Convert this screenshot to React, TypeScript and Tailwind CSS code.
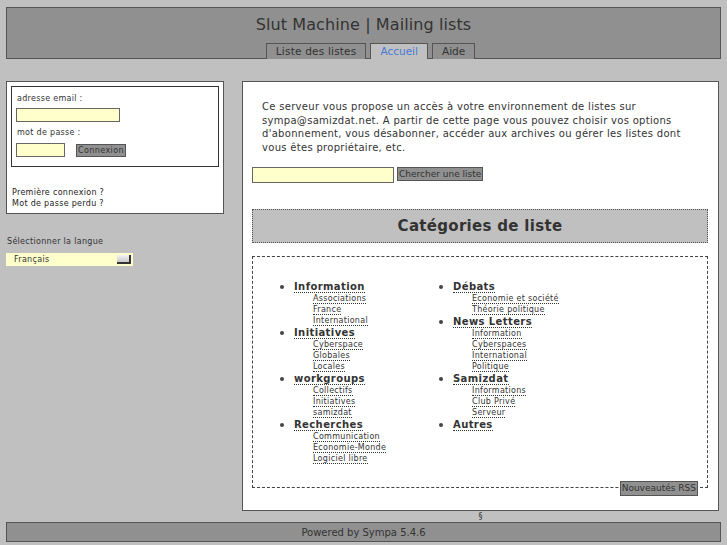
const sub = 'block text-[8px] leading-[11px] tracking-[0.3px] text-[#333]';

interface Cat {
  name: string;
  items: string[];
}

const col1: Cat[] = [
  { name: 'Information', items: ['Associations', 'France', 'International'] },
  { name: 'Initiatives', items: ['Cyberspace', 'Globales', 'Locales'] },
  { name: 'workgroups', items: ['Collectifs', 'Initiatives', 'samizdat'] },
  { name: 'Recherches', items: ['Communication', 'Economie-Monde', 'Logiciel libre'] },
];

const col2: Cat[] = [
  { name: 'Débats', items: ['Economie et société', 'Théorie politique'] },
  { name: 'News Letters', items: ['Information', 'Cyberspaces', 'International', 'Politique'] },
  { name: 'Samizdat', items: ['Informations', 'Club Privé', 'Serveur'] },
  { name: 'Autres', items: [] },
];

function CatList({ cats }: { cats: Cat[] }) {
  return (
    <ul className="list-disc pl-[10px] w-[159px] marker:text-[#444] marker:text-[12px]">
      {cats.map((c) => (
        <li key={c.name} className="text-[10px] leading-[13px] font-bold tracking-[0.4px] text-[#333]">
          <span className="border-b border-dotted border-[#333]">{c.name}</span>
          {c.items.length > 0 && (
            <ul className="ml-[19px] font-normal">
              {c.items.map((i) => (
                <li key={i} className={sub}>
                  <span className="border-b border-dotted border-[#333]">{i}</span>
                </li>
              ))}
            </ul>
          )}
        </li>
      ))}
    </ul>
  );
}

export default function App() {
  return (
    <div
      className="w-[727px] h-[545px] overflow-hidden bg-[#c0c0c0] text-[#333] pt-[7px] px-[6px]"
      style={{ fontFamily: '"DejaVu Sans", Verdana, sans-serif' }}
    >
      {/* header */}
      <div className="h-[52px] bg-[#909090] border border-[#555] flex flex-col items-center">
        <h1 className="text-[16px] leading-[20px] mt-[7px] text-[#333] tracking-[0.1px]">Slut Machine | Mailing lists</h1>
        <div className="mt-auto flex gap-[4px] -mb-px text-[10.5px] leading-[14px] ml-[14px]">
          <span className="px-[9px] border border-[#555] border-b-0 bg-[#909090] text-[#333] tracking-[0.2px]">Liste des listes</span>
          <span className="px-[9px] border border-[#555] border-b-0 bg-[#c0c0c0] text-[#4a78d6] h-[16px]">Accueil</span>
          <span className="px-[9px] border border-[#555] border-b-0 bg-[#909090] text-[#333]">Aide</span>
        </div>
      </div>

      <div className="flex gap-[18px] mt-[22px]">
        {/* left column */}
        <div className="w-[218px] shrink-0">
          <div className="bg-white border border-[#555] h-[133px] p-[4px]">
            <div className="border border-[#333] h-[81px] px-[4px] pt-[5px] text-[8px] tracking-[0.3px]">
              <div className="leading-[14px] pl-[1px]">adresse email :</div>
              <div className="mt-[2px] w-[104px] h-[14px] bg-[#ffffcc] border border-[#666]" />
              <div className="leading-[14px] mt-[4px] pl-[1px]">mot de passe :</div>
              <div className="flex items-center gap-[11px] mt-[3px]">
                <div className="w-[49px] h-[14px] bg-[#ffffcc] border border-[#666]" />
                <button className="h-[13px] px-[1px] bg-[#909090] border border-[#555] text-[8px] leading-[11px] tracking-[0.4px] text-[#333]">
                  Connexion
                </button>
              </div>
            </div>
            <div className="mt-[20px] px-[1px] text-[8px] leading-[11px] tracking-[0.3px] text-[#222]">
              <div>Première connexion ?</div>
              <div>Mot de passe perdu ?</div>
            </div>
          </div>
          <div className="mt-[22px] ml-[1px] text-[8px] leading-[11px] tracking-[0.3px]">Sélectionner la langue</div>
          <div className="mt-[6px] w-[127px] h-[13px] bg-[#ffffcc] flex items-center justify-between pl-[8px] pr-[2px] text-[8px] tracking-[0.3px]">
            <span>Français</span>
            <span className="w-[14px] h-[9px] bg-gradient-to-b from-[#f4f4f4] to-[#c8c8c8] border-r-2 border-b-2 border-[#333]" />
          </div>
        </div>

        {/* main */}
        <div className="w-[477px] h-[430px] bg-white border border-[#555] pt-[18px] pl-[9px]">
          <p className="pl-[10px] pr-[22px] text-[10px] leading-[13.5px] tracking-[0.3px] text-[#333]">
            Ce serveur vous propose un accès à votre environnement de listes sur sympa@samizdat.net. A partir de cette page vous pouvez choisir vos options d'abonnement, vous désabonner, accéder aux archives ou gérer les listes dont vous êtes propriétaire, etc.
          </p>
          <div className="flex items-start gap-[3px] mt-[13px]">
            <div className="w-[142px] h-[16px] bg-[#ffffcc] border border-[#666]" />
            <button className="h-[14px] px-[1px] bg-[#909090] border border-[#555] text-[9px] leading-[12px] text-[#333]">
              Chercher une liste
            </button>
          </div>
          <div className="mt-[26px] w-[456px] h-[34px] bg-[#c0c0c0] border border-dotted border-[#555] flex items-center justify-center">
            <h2 className="text-[15px] font-bold text-[#333] tracking-[0.3px]">Catégories de liste</h2>
          </div>
          <div className="relative mt-[13px] w-[456px] h-[232px] border border-dashed border-[#444]">
            <div className="flex pl-[31px] pt-[23px]">
              <CatList cats={col1} />
              <CatList cats={col2} />
            </div>
            <button className="absolute right-[9px] bottom-[-9px] h-[15px] px-[1px] bg-[#909090] border border-[#555] text-[9px] leading-[13px] text-[#333]">
              Nouveautés RSS
            </button>
          </div>
        </div>
      </div>

      <div className="ml-[236px] w-[477px] text-center text-[8px] leading-[10px] mt-[1px]">§</div>
      <div className="h-[20px] bg-[#909090] border border-[#555] flex items-center justify-center text-[10px] text-[#333]">
        Powered by Sympa 5.4.6
      </div>
    </div>
  );
}
